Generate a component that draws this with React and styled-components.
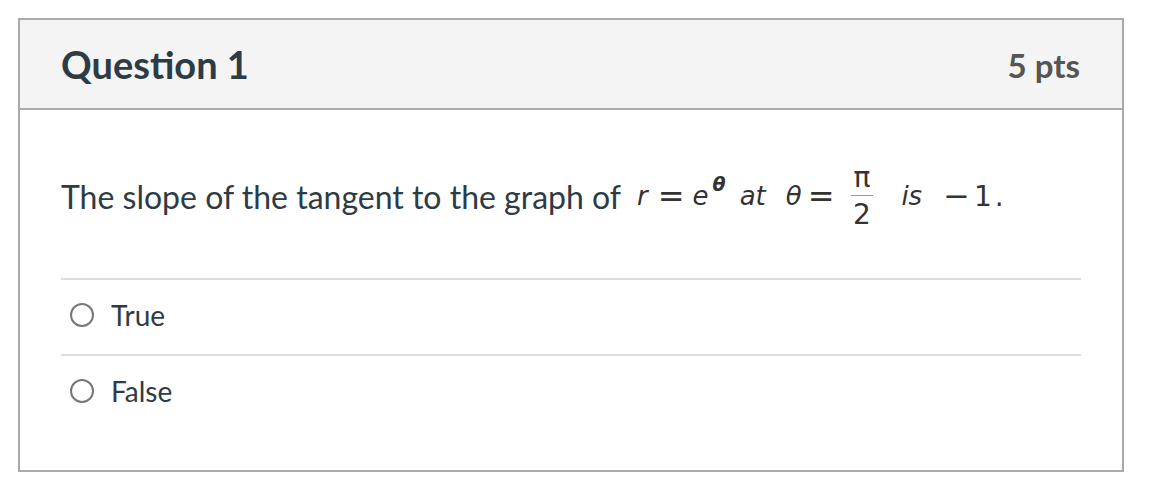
import React from 'react';
import styled, { createGlobalStyle } from 'styled-components';

const GlobalStyle = createGlobalStyle`
  html, body {
    margin: 0;
    padding: 0;
    background: #ffffff;
  }
`;

const Page = styled.div`
  padding: 18px 28px 20px 18px;
  font-family: Lato, 'Noto Sans', sans-serif;
`;

const Card = styled.section`
  border: 2px solid #aaaaaa;
  background: #ffffff;
`;

const Header = styled.header`
  display: flex;
  align-items: center;
  justify-content: space-between;
  height: 88px;
  padding: 0 42px 0 41px;
  background: #f4f4f4;
  border-bottom: 2px solid #aaaaaa;
`;

const Title = styled.h2`
  margin: 0;
  font-size: 38px;
  font-weight: 700;
  color: #2d3b45;
`;

const Points = styled.div`
  font-size: 33px;
  font-weight: 700;
  color: #555555;
  padding-top: 2px;
`;

const Body = styled.div`
  padding: 0 41px 40px 41px;
`;

const QuestionText = styled.div`
  display: flex;
  align-items: center;
  height: 168px;
  padding-top: 4px;
  box-sizing: border-box;
  font-size: 32px;
  color: #2d3b45;
  white-space: nowrap;
`;

const Math = styled.span`
  display: inline-flex;
  align-items: center;
  margin-left: 16px;
  font-family: 'DejaVu Sans', Verdana, sans-serif;
  font-size: 26px;
  color: #333333;
`;

const Var = styled.span`
  font-style: italic;
  margin: ${({ $m }) => $m || '0'};
`;

const Op = styled.span`
  font-size: 32px;
  margin: ${({ $m }) => $m || '0'};
`;

const Num = styled.span`
  font-size: 28px;
  letter-spacing: 3px;
  margin: ${({ $m }) => $m || '0'};
`;

const Sup = styled.span`
  font-style: italic;
  font-weight: 700;
  font-size: 19px;
  position: relative;
  top: -12px;
  margin-left: 4px;
`;

const Fraction = styled.span`
  display: inline-flex;
  flex-direction: column;
  align-items: center;
  margin: 0 10px 0 16px;
  font-size: 28px;
  line-height: 26px;
`;

const Numer = styled.span`
  padding: 0 3px 4px;
  border-bottom: 1px solid #999999;
`;

const Denom = styled.span`
  padding-top: 6px;
`;

const Answer = styled.label`
  display: flex;
  align-items: center;
  height: 76px;
  padding-bottom: 4px;
  box-sizing: border-box;
  border-top: 2px solid #dddddd;
  font-size: 28px;
  color: #2d3b45;
`;

const Radio = styled.span`
  width: 20px;
  height: 20px;
  border: 2px solid #777777;
  border-radius: 50%;
  margin: 0 17px 0 9px;
  box-sizing: content-box;
  flex: none;
`;

const answers = ['True', 'False'];

export default function App() {
  return (
    <>
      <GlobalStyle />
      <Page>
        <Card>
          <Header>
            <Title>Question 1</Title>
            <Points>5 pts</Points>
          </Header>
          <Body>
            <QuestionText>
              The slope of the tangent to the graph of
              <Math>
                <Var>r</Var>
                <Op $m="0 8px 0 10px">=</Op>
                <Var>e</Var>
                <Sup>θ</Sup>
                <Var $m="0 0 0 14px">at</Var>
                <Var $m="0 0 0 20px">θ</Var>
                <Op $m="0 0 0 6px">=</Op>
                <Fraction>
                  <Numer>π</Numer>
                  <Denom>2</Denom>
                </Fraction>
                <Var $m="0 0 0 18px">is</Var>
                <Op $m="0 0 0 21px">−</Op>
                <Num $m="0 0 0 4px">1.</Num>
              </Math>
            </QuestionText>
            {answers.map((a) => (
              <Answer key={a}>
                <Radio />
                {a}
              </Answer>
            ))}
          </Body>
        </Card>
      </Page>
    </>
  );
}
